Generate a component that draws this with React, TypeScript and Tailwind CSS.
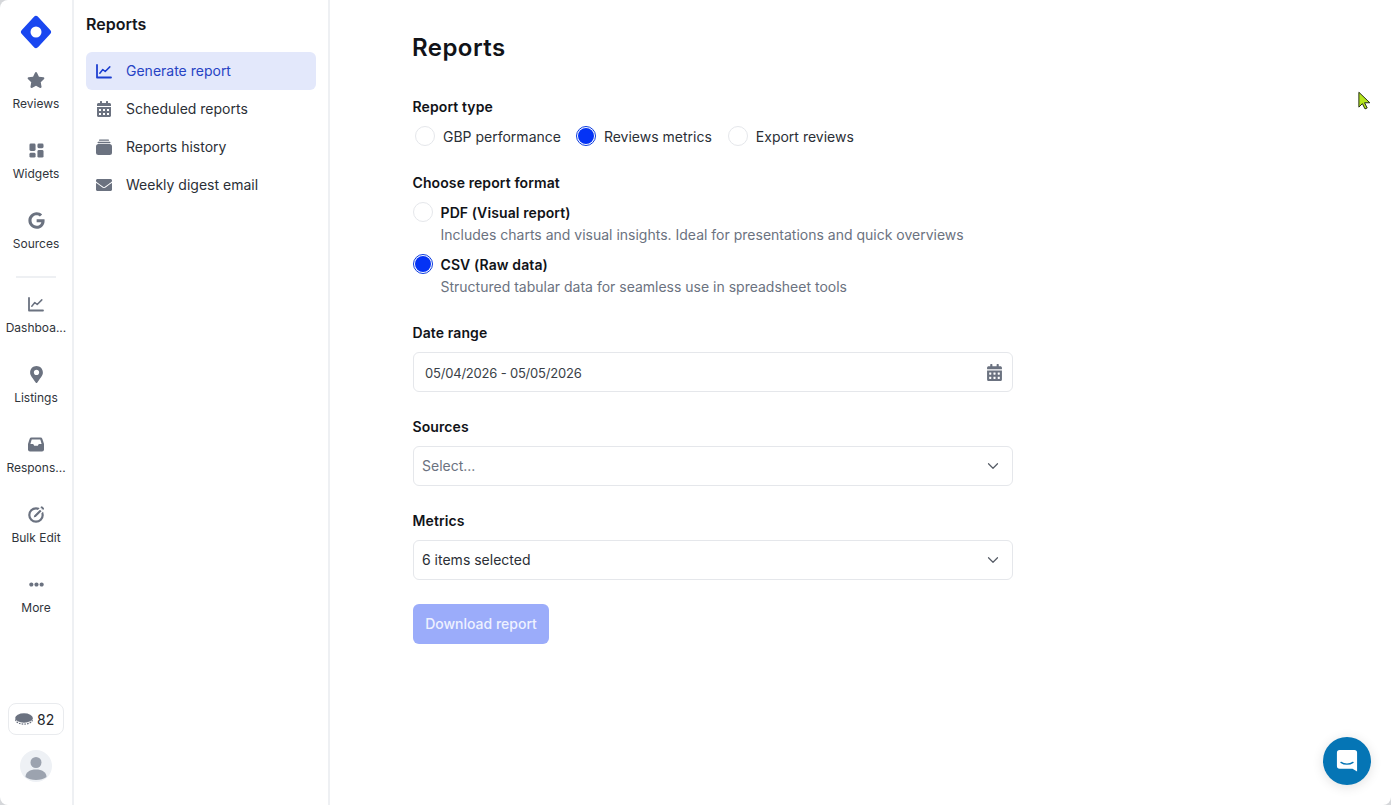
import React from "react";
import { ChevronDown } from "lucide-react";
import {
  FaCalendarAlt,
  FaEllipsisH,
  FaEnvelope,
  FaGoogle,
  FaMapMarkerAlt,
  FaStar,
} from "react-icons/fa";

function ChartIcon() {
  return (
    <svg width="16" height="15" viewBox="0 0 16 15" fill="none" stroke="currentColor" strokeLinecap="round" strokeLinejoin="round">
      <path d="M1 1v12.500h14" strokeWidth="1.800" />
      <path d="M3.800 9.200l3-3.700 2.400 2 4.600-4.600" strokeWidth="1.500" />
    </svg>
  );
}

function WidgetsIcon() {
  return (
    <svg width="15" height="15" viewBox="0 0 16 16" fill="currentColor">
      <rect x="0.5" y="0.5" width="6.500" height="8" rx="1.500" />
      <rect x="9" y="0.5" width="6.500" height="5" rx="1.500" />
      <rect x="0.5" y="10.500" width="6.500" height="5" rx="1.500" />
      <rect x="9" y="7.500" width="6.500" height="8" rx="1.500" />
    </svg>
  );
}

function InboxIcon() {
  return (
    <svg width="16" height="15" viewBox="0 0 16 15">
      <path d="M3.500 0.500h9a2 2 0 0 1 1.900 1.400L16 7v5.500a2 2 0 0 1-2 2H2a2 2 0 0 1-2-2V7l1.600-5.100A2 2 0 0 1 3.500 0.500z" fill="currentColor" />
      <path d="M3.700 2.500h8.600L13.600 7h-2.800l-1 1.800H6.200L5.200 7H2.400z" fill="white" />
    </svg>
  );
}

function BulkEditIcon() {
  return (
    <svg width="17" height="17" viewBox="0 0 17 17" fill="none">
      <circle cx="8" cy="9" r="6.700" stroke="currentColor" strokeWidth="2.200" />
      <path d="M4.800 12.400l.9-3.300 6.300-6.300 2.500 2.500-6.300 6.200z" fill="currentColor" stroke="white" strokeWidth="1.300" strokeLinejoin="round" />
      <path d="M12.400 1.200l.5-.5a1.200 1.200 0 0 1 1.700 0l1 1a1.200 1.200 0 0 1 0 1.700l-.5.5z" fill="currentColor" />
    </svg>
  );
}

function HistoryIcon() {
  return (
    <svg width="16" height="16" viewBox="0 0 16 16" fill="currentColor">
      <rect x="3" y="0.500" width="10" height="1.300" rx="0.600" />
      <rect x="1.500" y="2.800" width="13" height="1.500" rx="0.700" />
      <rect x="0" y="5" width="16" height="11" rx="2.500" />
    </svg>
  );
}

function CoinIcon() {
  return (
    <svg width="18" height="12" viewBox="0 0 18 12">
      <ellipse cx="9" cy="6.800" rx="8.300" ry="4.300" fill="none" stroke="#6b7280" strokeWidth="1.200" strokeDasharray="1.600 1.100" />
      <ellipse cx="9" cy="5" rx="8.800" ry="4.700" fill="#6b7280" />
    </svg>
  );
}

function AvatarIcon() {
  return (
    <div className="flex h-8 w-8 items-center justify-center overflow-hidden rounded-full bg-[#eef1f5]">
      <svg width="32" height="32" viewBox="0 0 32 32" fill="#9ca3af">
        <circle cx="16" cy="12.500" r="5.500" />
        <path d="M5.500 27c0-5 4.500-7.500 10.500-7.500S26.500 22 26.500 27c-2.500 2-6.500 3-10.500 3s-8-1-10.500-3z" />
      </svg>
    </div>
  );
}

function RailItem({ icon, label }: { icon: React.ReactNode; label: string }) {
  return (
    <div className="flex h-[70px] w-full flex-col items-center pt-[2px]">
      <div className="flex h-[20px] items-center justify-center text-[#6b7280]">{icon}</div>
      <div className="mt-[4px] w-full whitespace-nowrap text-center text-[12px] leading-[20px] text-[#30343b]">
        {label}
      </div>
    </div>
  );
}

function SideItem({ icon, label, active }: { icon: React.ReactNode; label: string; active?: boolean }) {
  return (
    <div
      className={
        active
          ? "flex h-[38px] items-center gap-[14px] rounded-md bg-[#e3e8fb] pl-[10px] text-[#2743c4]"
          : "flex h-[38px] items-center gap-[14px] rounded-md pl-[10px] text-[#2b2f36]"
      }
    >
      <span className={active ? "flex w-4 justify-center text-[#1d3fd0]" : "flex w-4 justify-center text-[#6b7280]"}>
        {icon}
      </span>
      <span className="pb-[2px] text-[14px]">{label}</span>
    </div>
  );
}

function Radio({ checked }: { checked?: boolean }) {
  return (
    <span
      className={
        checked
          ? "flex h-[20px] w-[20px] shrink-0 items-center justify-center rounded-full border border-[#0a3be0] bg-white"
          : "h-[20px] w-[20px] shrink-0 rounded-full border border-[#e5e7eb] bg-white"
      }
    >
      {checked && <span className="h-[16px] w-[16px] rounded-full bg-[#0433f5]" />}
    </span>
  );
}

function FieldLabel({ children }: { children: React.ReactNode }) {
  return (
    <div className="-ml-[0.5px] text-[14px] font-semibold leading-[20px] tracking-[0.1px] text-[#111318]">
      {children}
    </div>
  );
}

function FormatOption({ title, desc, checked }: { title: string; desc: string; checked?: boolean }) {
  return (
    <div className="h-[52px]">
      <div className="flex h-[22px] items-center gap-[7.500px]">
        <Radio checked={checked} />
        <span className="text-[14px] font-semibold tracking-[0.1px] text-[#111318]">{title}</span>
      </div>
      <div className="mt-[1px] pl-[27.500px] text-[14px] leading-[22px] text-[#6b7280]">{desc}</div>
    </div>
  );
}

function SelectBox({ text, muted }: { text: string; muted?: boolean }) {
  return (
    <div className="mt-[9px] flex h-[40px] w-[600px] items-center justify-between rounded-md border border-[#e5e7eb] pl-[8px] pr-[10px]">
      <span className={muted ? "pb-[2px] text-[14px] text-[#6b7280]" : "pb-[2px] text-[14px] text-[#2b2f36]"}>{text}</span>
      <ChevronDown size={18} strokeWidth={1.600} className="text-[#565c66]" />
    </div>
  );
}

export default function App() {
  return (
    <div className="bg-[#d5d7da]">
      <div className="relative flex h-[805px] w-[1391px] overflow-hidden rounded-tl-[8px] rounded-bl-[8px] rounded-br-[8px] bg-white font-['Inter',sans-serif]">
        <aside className="flex h-full w-[74px] shrink-0 flex-col items-center border-r-2 border-[#eef0f3] pt-[14px]">
          <svg width="34" height="36" viewBox="0 0 34 36" className="shrink-0">
            <path d="M17 5L29 18L17 31L5 18z" fill="#1a47f0" stroke="#1a47f0" strokeWidth="6" strokeLinejoin="round" />
            <circle cx="17" cy="18" r="5.500" fill="white" />
          </svg>
          <div className="mt-[18px] h-[208px] w-full">
            <RailItem icon={<FaStar size={18} />} label="Reviews" />
            <RailItem icon={<WidgetsIcon />} label="Widgets" />
            <RailItem icon={<FaGoogle size={17} />} label="Sources" />
          </div>
          <div className="h-[2px] w-[40px] shrink-0 bg-[#eef0f3]" />
          <div className="mt-[14px] w-full">
            <RailItem icon={<ChartIcon />} label="Dashboa..." />
            <RailItem icon={<FaMapMarkerAlt size={17} />} label="Listings" />
            <RailItem icon={<InboxIcon />} label="Respons..." />
            <RailItem icon={<BulkEditIcon />} label="Bulk Edit" />
            <RailItem icon={<FaEllipsisH size={15} />} label="More" />
          </div>
          <div className="mt-auto mb-[23px] flex flex-col items-center gap-[15px]">
            <div className="flex h-[32px] w-[56px] items-center gap-[4px] rounded-lg border border-[#e9ebee] pl-[6px] text-[14px] text-[#23262b]">
              <CoinIcon />
              82
            </div>
            <AvatarIcon />
          </div>
        </aside>

        <nav className="h-full w-[256px] shrink-0 border-r-2 border-[#eef0f3] pl-[12px] pr-[12px] pt-[14px]">
          <div className="text-[16px] font-semibold leading-[20px] text-[#15171c]">Reports</div>
          <div className="mt-[18px] flex flex-col">
            <SideItem active icon={<ChartIcon />} label="Generate report" />
            <SideItem icon={<FaCalendarAlt size={16} />} label="Scheduled reports" />
            <SideItem icon={<HistoryIcon />} label="Reports history" />
            <SideItem icon={<FaEnvelope size={16} />} label="Weekly digest email" />
          </div>
        </nav>

        <main className="flex-1 pl-[83px] pt-[32px]">
          <h1 className="-ml-[1px] text-[24px] font-semibold leading-[32px] tracking-[0.45px] text-[#111318]">Reports</h1>

          <div className="mt-[33px]">
            <FieldLabel>Report type</FieldLabel>
            <div className="mt-[8px] flex h-[22px] items-center pl-[2px] text-[14px] text-[#2b2f36]">
              <Radio />
              <span className="ml-[8px] mr-[15px]">GBP performance</span>
              <Radio checked />
              <span className="ml-[8px] mr-[16px]">Reviews metrics</span>
              <Radio />
              <span className="ml-[8px]">Export reviews</span>
            </div>
          </div>

          <div className="mt-[26px]">
            <FieldLabel>Choose report format</FieldLabel>
            <div className="mt-[8px]">
              <FormatOption
                title="PDF (Visual report)"
                desc="Includes charts and visual insights. Ideal for presentations and quick overviews"
              />
              <FormatOption
                checked
                title="CSV (Raw data)"
                desc="Structured tabular data for seamless use in spreadsheet tools"
              />
            </div>
          </div>

          <div className="mt-[18px]">
            <FieldLabel>Date range</FieldLabel>
            <div className="mt-[9px] flex h-[40px] w-[600px] items-center justify-between rounded-md border border-[#e5e7eb] pl-[11px] pr-[9px]">
              <span className="pt-[3px] text-[13px] tracking-[-0.2px] text-[#3a3f47]">05/04/2026 - 05/05/2026</span>
              <FaCalendarAlt size={17} className="text-[#6b7280]" />
            </div>
          </div>

          <div className="mt-[25px]">
            <FieldLabel>Sources</FieldLabel>
            <SelectBox muted text="Select..." />
          </div>

          <div className="mt-[25px]">
            <FieldLabel>Metrics</FieldLabel>
            <SelectBox text="6 items selected" />
          </div>

          <button className="mt-[24px] flex h-[40px] w-[136px] items-center justify-center rounded-md bg-[#9bacfa] pb-[2px] text-[14px] font-medium text-[#eef1ff]">
            Download report
          </button>
        </main>

        {/* mouse pointer from the recording */}
        <svg width="14" height="20" viewBox="0 0 16 22" className="absolute left-[1358px] top-[91px]">
          <path d="M1 1v17l4-4 3 6 2.500-1-3-6h6z" fill="#b6e61e" stroke="#1f2a10" strokeWidth="1.100" />
        </svg>

        <div className="absolute left-[1323px] top-[737px] flex h-[48px] w-[48px] items-center justify-center rounded-full bg-[#0575b5] shadow-[0_2px_12px_rgba(0,0,0,0.12)]">
          <svg width="22" height="24" viewBox="0 0 24 26">
            <path d="M4 1h16a3 3 0 0 1 3 3v20.500l-5-3H4a3 3 0 0 1-3-3V4a3 3 0 0 1 3-3z" fill="white" />
            <path d="M5.500 14.500c3.500 2.500 9.500 2.500 13 0" fill="none" stroke="#0575b5" strokeWidth="1.500" strokeLinecap="round" />
          </svg>
        </div>
      </div>
    </div>
  );
}
